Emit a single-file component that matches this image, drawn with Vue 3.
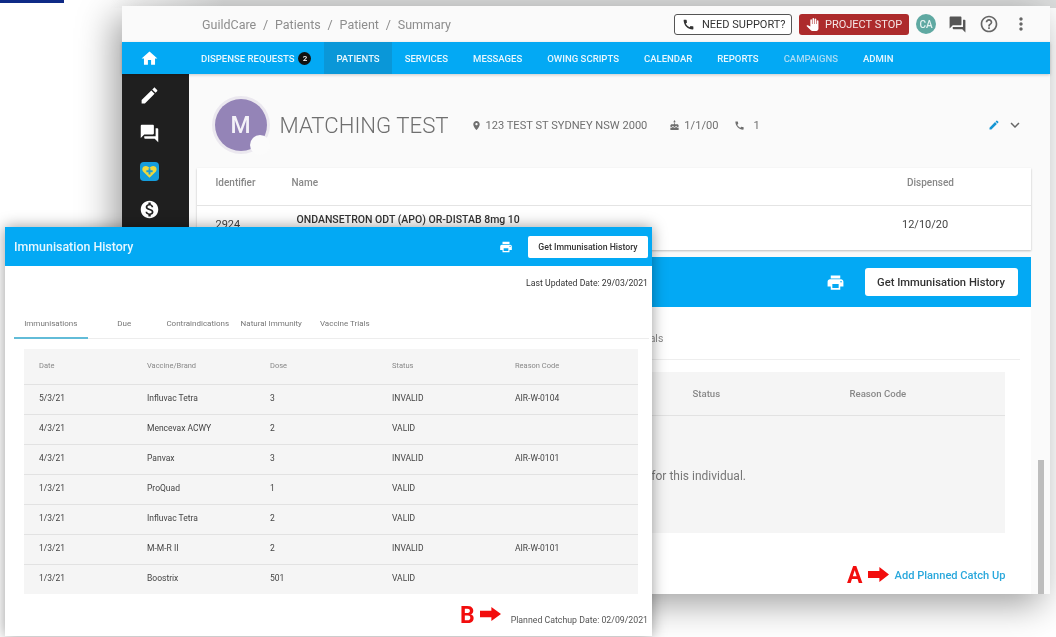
<script setup>
const icons = {
  home: 'M10 20v-6h4v6h5v-8h3L12 3 2 12h3v8z',
  edit: 'M3 17.25V21h3.75L17.81 9.94l-3.75-3.75L3 17.25zM20.71 7.04c.39-.39.39-1.02 0-1.41l-2.34-2.34c-.39-.39-1.02-.39-1.41 0l-1.83 1.83 3.75 3.75 1.83-1.83z',
  forum: 'M21 6h-2v9H6v2c0 .55.45 1 1 1h11l4 4V7c0-.55-.45-1-1-1zm-4 6V3c0-.55-.45-1-1-1H3c-.55 0-1 .45-1 1v14l4-4h10c.55 0 1-.45 1-1z',
  money: 'M12 2C6.48 2 2 6.48 2 12s4.48 10 10 10 10-4.48 10-10S17.52 2 12 2zm1.41 16.09V20h-2.67v-1.93c-1.71-.36-3.16-1.46-3.27-3.4h1.96c.1 1.05.82 1.87 2.65 1.87 1.96 0 2.4-.98 2.4-1.59 0-.83-.44-1.61-2.67-2.14-2.48-.6-4.18-1.62-4.18-3.67 0-1.72 1.39-2.84 3.11-3.21V4h2.67v1.95c1.86.45 2.79 1.86 2.85 3.39H14.3c-.05-1.11-.64-1.87-2.22-1.87-1.5 0-2.4.68-2.4 1.64 0 .84.65 1.39 2.67 1.91s4.18 1.39 4.18 3.91c-.01 1.83-1.38 2.83-3.12 3.16z',
  print: 'M19 8H5c-1.66 0-3 1.34-3 3v6h4v4h12v-4h4v-6c0-1.66-1.34-3-3-3zm-3 11H8v-5h8v5zm3-7c-.55 0-1-.45-1-1s.45-1 1-1 1 .45 1 1-.45 1-1 1zm-1-9H6v4h12V3z',
  phone: 'M20.01 15.38c-1.23 0-2.42-.2-3.53-.56-.35-.12-.74-.03-1.01.24l-1.57 1.97c-2.83-1.35-5.48-3.9-6.89-6.83l1.95-1.66c.27-.28.35-.67.24-1.02-.37-1.11-.56-2.3-.56-3.53 0-.54-.45-.99-.99-.99H4.19C3.65 3 3 3.24 3 3.99 3 13.28 10.73 21 20.01 21c.71 0 .99-.63.99-1.18v-3.45c0-.54-.45-.99-.99-.99z',
  place: 'M12 2C8.13 2 5 5.13 5 9c0 5.25 7 13 7 13s7-7.75 7-13c0-3.87-3.13-7-7-7zm0 9.5c-1.38 0-2.5-1.12-2.5-2.5s1.12-2.5 2.5-2.5 2.5 1.12 2.5 2.5-1.12 2.5-2.5 2.5z',
  cake: 'M12 6c1.11 0 2-.9 2-2 0-.38-.1-.73-.29-1.03L12 0l-1.71 2.97c-.19.3-.29.65-.29 1.03 0 1.1.9 2 2 2zm4.6 9.99l-1.07-1.07-1.08 1.07c-1.3 1.3-3.58 1.31-4.89 0l-1.07-1.07-1.09 1.07C6.75 16.64 5.88 17 4.96 17c-.73 0-1.4-.23-1.96-.61V21c0 .55.45 1 1 1h16c.55 0 1-.45 1-1v-4.61c-.56.38-1.23.61-1.96.61-.92 0-1.79-.36-2.44-1.01zM18 9h-5V7h-2v2H6c-1.66 0-3 1.34-3 3v1.54c0 1.08.88 1.96 1.96 1.96.52 0 1.02-.2 1.38-.57l2.14-2.13 2.13 2.13c.74.74 2.03.74 2.77 0l2.14-2.13 2.13 2.13c.37.37.86.57 1.38.57 1.08 0 1.96-.88 1.96-1.96V12C21 10.34 19.66 9 18 9z',
  help: 'M11 18h2v-2h-2v2zm1-16C6.48 2 2 6.48 2 12s4.48 10 10 10 10-4.48 10-10S17.52 2 12 2zm0 18c-4.41 0-8-3.59-8-8s3.59-8 8-8 8 3.59 8 8-3.59 8-8 8zm0-14c-2.21 0-4 1.79-4 4h2c0-1.1.9-2 2-2s2 .9 2 2c0 2-3 1.75-3 5h2c0-2.25 3-2.5 3-5 0-2.21-1.79-4-4-4z',
  more: 'M12 8c1.1 0 2-.9 2-2s-.9-2-2-2-2 .9-2 2 .9 2 2 2zm0 2c-1.1 0-2 .9-2 2s.9 2 2 2 2-.9 2-2-.9-2-2-2zm0 6c-1.1 0-2 .9-2 2s.9 2 2 2 2-.9 2-2-.9-2-2-2z',
  chevron: 'M16.59 8.59L12 13.17 7.41 8.59 6 10l6 6 6-6z',
  hand: 'M23 5.5V20c0 2.2-1.8 4-4 4h-7.3c-1.08 0-2.1-.43-2.85-1.19L1 14.83s1.26-1.23 1.3-1.25c.22-.19.49-.29.79-.29.22 0 .42.06.6.16.04.01 4.31 2.46 4.31 2.46V4c0-.83.67-1.5 1.5-1.5S11 3.17 11 4v7h1V1.5c0-.83.67-1.5 1.5-1.5S15 .67 15 1.5V11h1V2.5c0-.83.67-1.5 1.5-1.5s1.5.67 1.5 1.5V11h1V5.5c0-.83.67-1.5 1.5-1.5s1.5.67 1.5 1.5z'
}
const arrow = 'M0 6h13V0l11 11-11 11v-6H0z'
const crumbs = ['GuildCare', '/', 'Patients', '/', 'Patient', '/', 'Summary']
const navItems = ['Patients', 'Services', 'Messages', 'Owing Scripts', 'Calendar', 'Reports', 'Campaigns', 'Admin']
const tabs = ['Immunisations', 'Due', 'Contraindications', 'Natural Immunity', 'Vaccine Trials']
const columns = ['Date', 'Vaccine/Brand', 'Dose', 'Status', 'Reason Code']
const rows = [
  ['5/3/21', 'Influvac Tetra', '3', 'INVALID', 'AIR-W-0104'],
  ['4/3/21', 'Mencevax ACWY', '2', 'VALID', ''],
  ['4/3/21', 'Panvax', '3', 'INVALID', 'AIR-W-0101'],
  ['1/3/21', 'ProQuad', '1', 'VALID', ''],
  ['1/3/21', 'Influvac Tetra', '2', 'VALID', ''],
  ['1/3/21', 'M-M-R II', '2', 'INVALID', 'AIR-W-0101'],
  ['1/3/21', 'Boostrix', '501', 'VALID', '']
]
</script>

<template>
  <div class="canvas">
    <div class="top-strip"></div>
    <div class="corner-bar"></div>

    <section class="window back">
      <header class="appbar">
        <div class="crumbs"><span v-for="(c, i) in crumbs" :key="i">{{ c }}</span></div>
        <div class="appbar-actions">
          <button class="support">
            <svg viewBox="0 0 24 24"><path :d="icons.phone" /></svg>NEED SUPPORT?
          </button>
          <button class="stop">
            <svg viewBox="0 0 24 24"><path :d="icons.hand" /></svg>PROJECT STOP
          </button>
          <span class="user">CA</span>
          <svg class="bar-icon forum" viewBox="0 0 24 24"><path :d="icons.forum" /></svg>
          <svg class="bar-icon help" viewBox="0 0 24 24"><path :d="icons.help" /></svg>
          <svg class="bar-icon more" viewBox="0 0 24 24"><path :d="icons.more" /></svg>
        </div>
      </header>

      <nav class="nav">
        <div class="nav-home">
          <svg viewBox="0 0 24 24"><path :d="icons.home" /></svg>
        </div>
        <a class="nav-item">DISPENSE REQUESTS<span class="badge">2</span></a>
        <a
          v-for="item in navItems"
          :key="item"
          class="nav-item"
          :class="{ active: item === 'Patients', muted: item === 'Campaigns' }"
        >{{ item.toUpperCase() }}</a>
      </nav>

      <div class="body">
        <aside class="side">
          <svg viewBox="0 0 24 24"><path :d="icons.edit" /></svg>
          <svg viewBox="0 0 24 24"><path :d="icons.forum" /></svg>
          <svg class="heart" viewBox="0 0 20 20">
            <rect width="20" height="20" rx="4" fill="#159ddc" />
            <path fill="#f0d83c" d="M10 16.5 3.2 10C1.4 7.2 3.2 4 6.2 4.2 8 4.3 9.2 5.2 10 6.2 10.8 5.2 12 4.3 13.8 4.2 16.8 4 18.6 7.2 16.8 10z" />
            <path fill="#159ddc" d="M9 6.5h2V8.8h2.3v2H11v2.3H9v-2.3H6.7v-2H9z" />
          </svg>
          <svg viewBox="0 0 24 24"><path :d="icons.money" /></svg>
        </aside>

        <main class="main">
          <div class="profile">
            <div class="avatar">M</div>
            <h1 class="patient-name">MATCHING TEST</h1>
            <span class="meta meta-address">
              <svg viewBox="0 0 24 24"><path :d="icons.place" /></svg>123 TEST ST SYDNEY NSW 2000
            </span>
            <span class="meta meta-dob">
              <svg viewBox="0 0 24 24"><path :d="icons.cake" /></svg>1/1/00
            </span>
            <span class="meta meta-phone">
              <svg viewBox="0 0 24 24"><path :d="icons.phone" /></svg>1
            </span>
            <div class="profile-actions">
              <svg class="pencil" viewBox="0 0 24 24"><path :d="icons.edit" /></svg>
              <svg class="chevron" viewBox="0 0 24 24"><path :d="icons.chevron" /></svg>
            </div>
          </div>

          <div class="script-card">
            <div class="script-head">
              <span class="c-id">Identifier</span>
              <span class="c-name">Name</span>
              <span class="c-date">Dispensed</span>
            </div>
            <div class="script-row">
              <span class="c-id">2924</span>
              <span class="c-name drug">ONDANSETRON ODT (APO) OR-DISTAB 8mg 10</span>
              <span class="c-date">12/10/20</span>
            </div>
          </div>

          <div class="back-panel">
            <div class="back-panel-bar">
              <svg viewBox="0 0 24 24"><path :d="icons.print" /></svg>
              <button class="back-get">Get Immunisation History</button>
            </div>
            <div class="back-tabs">
              <span v-for="tab in tabs" :key="tab">{{ tab }}</span>
            </div>
            <div class="back-table">
              <div class="back-table-head">
                <span v-for="col in columns.slice(3)" :key="col">{{ col }}</span>
              </div>
              <div class="back-empty">No immunisations are recorded for this individual.</div>
            </div>
            <div class="catch-up">
              <span class="mark">A</span>
              <svg class="mark-arrow" viewBox="0 0 24 22" preserveAspectRatio="none"><path :d="arrow" /></svg>
              <a class="catch-link">Add Planned Catch Up</a>
            </div>
          </div>
        </main>
        <div class="scroll-rail"><div class="scroll-thumb"></div></div>
      </div>
    </section>

    <section class="window front">
      <header class="front-bar">
        <h2>Immunisation History</h2>
        <svg viewBox="0 0 24 24"><path :d="icons.print" /></svg>
        <button>Get Immunisation History</button>
      </header>
      <div class="updated">Last Updated Date: 29/03/2021</div>
      <div class="front-tabs">
        <span v-for="(tab, i) in tabs" :key="tab" class="front-tab" :class="{ on: i === 0 }">{{ tab }}</span>
      </div>
      <div class="front-table">
        <div class="front-row head">
          <span v-for="col in columns" :key="col">{{ col }}</span>
        </div>
        <div v-for="(row, i) in rows" :key="i" class="front-row">
          <span v-for="(cell, j) in row" :key="j">{{ cell }}</span>
        </div>
      </div>
      <div class="planned">
        <span class="mark">B</span>
        <svg class="mark-arrow" viewBox="0 0 24 22" preserveAspectRatio="none"><path :d="arrow" /></svg>
        <span class="planned-text">Planned Catchup Date: 02/09/2021</span>
      </div>
    </section>
  </div>
</template>

<style scoped>
.canvas {
  position: relative;
  width: 1056px;
  height: 637px;
  overflow: hidden;
  background: #fff;
  font-family: Roboto, "Liberation Sans", sans-serif;
  filter: blur(0.4px);
}
svg { display: block; fill: currentColor; }
button { font-family: inherit; cursor: pointer; }
h1, h2 { margin: 0; font-weight: inherit; }

.top-strip {
  position: absolute;
  left: 110px;
  right: 0;
  top: 0;
  height: 8px;
  background: linear-gradient(90deg, #fff, #dcdddd 12%);
}
.corner-bar {
  position: absolute;
  left: 0;
  top: 0;
  width: 64px;
  height: 3px;
  background: #0f2a86;
}
.window { position: absolute; background: #fff; }

.back {
  left: 122px;
  top: 6px;
  width: 928px;
  height: 588px;
  display: flex;
  flex-direction: column;
  background: #fafafa;
  box-shadow: -8px 10px 34px rgba(0, 0, 0, 0.38);
}
.appbar {
  height: 36px;
  flex: none;
  display: flex;
  align-items: center;
  justify-content: space-between;
  padding-left: 80px;
  background: #fafafa;
}
.crumbs { display: flex; gap: 6.8px; font-size: 12.5px; color: #8d8d8d; }
.appbar-actions { display: flex; align-items: center; }
.support, .stop {
  display: flex;
  align-items: center;
  height: 21px;
  padding: 0;
  font-size: 11px;
  border-radius: 3px;
  box-sizing: border-box;
}
.support {
  width: 118px;
  padding-left: 7px;
  gap: 7px;
  border: 1px solid #555;
  background: #fff;
  color: #333;
}
.support svg { width: 13px; height: 13px; }
.stop {
  width: 110px;
  margin-left: 7px;
  padding-left: 7px;
  gap: 6px;
  border: none;
  background: #ad2b2c;
  color: #f5e6e6;
}
.stop svg { width: 13px; height: 13px; color: #fff; }
.user {
  width: 20px;
  height: 20px;
  margin-left: 7px;
  border-radius: 50%;
  background: #5fa9a2;
  color: #e6f3f1;
  font-size: 10px;
  font-weight: 500;
  display: flex;
  align-items: center;
  justify-content: center;
}
.bar-icon { width: 20px; height: 20px; color: #555; }
.forum { margin-left: 12px; width: 19px; height: 19px; }
.help { margin-left: 12px; width: 20px; height: 20px; color: #666; }
.more { margin-left: 12px; margin-right: 19px; color: #666; }

.nav {
  height: 32px;
  flex: none;
  display: flex;
  align-items: stretch;
  background: #03a9f4;
  color: #e8f7fe;
  box-shadow: 0 1px 3px rgba(0, 0, 0, 0.2);
  position: relative;
  z-index: 1;
}
.nav-home {
  width: 66.5px;
  box-sizing: border-box;
  padding-right: 11px;
  display: flex;
  align-items: center;
  justify-content: center;
  color: #fff;
}
.nav-home svg { width: 19px; height: 19px; }
.nav-item {
  display: flex;
  align-items: center;
  padding: 0 12.5px;
  font-size: 9.55px;
  font-weight: 500;
}
.nav-item.active { background: #0a97d8; }
.nav-item.muted { color: #a9dcf6; }
.badge {
  width: 13px;
  height: 13px;
  margin-left: 4px;
  border-radius: 50%;
  background: #111;
  color: #fff;
  font-size: 8px;
  display: flex;
  align-items: center;
  justify-content: center;
}

.body { flex: 1; min-height: 0; display: flex; position: relative; overflow: hidden; }
.side {
  width: 66.5px;
  flex: none;
  box-sizing: border-box;
  padding: 11px 11px 0 0;
  background: #1f1f1f;
  color: #fff;
  display: flex;
  flex-direction: column;
  align-items: center;
  gap: 17px;
}
.side svg { width: 21px; height: 21px; }
.side .heart { width: 19px; height: 19px; margin: 1px 0; }
.main { flex: 1; min-width: 0; padding-left: 8px; background: #fafafa; }

.profile { height: 94px; box-sizing: border-box; padding-top: 8px; display: flex; align-items: center; color: #777; }
.avatar {
  width: 52px;
  height: 52px;
  margin-left: 18px;
  flex: none;
  box-sizing: border-box;
  border-radius: 50%;
  background: #9484b7;
  box-shadow: 0 0 0 3px #ebe8ef;
  color: #f4f2f8;
  font-size: 23px;
  font-weight: 500;
  display: flex;
  align-items: center;
  justify-content: center;
  position: relative;
}
.avatar::after {
  content: "";
  position: absolute;
  right: -3px;
  bottom: -4px;
  width: 20px;
  height: 20px;
  border-radius: 50%;
  background: #fbfbfb;
}
.patient-name {
  margin-left: 13px;
  width: 191px;
  flex: none;
  font-size: 22.2px;
  font-weight: 300;
  color: #6f6f6f;
}
.meta {
  display: flex;
  align-items: center;
  gap: 4px;
  font-size: 11.1px;
  color: #6f6f6f;
}
.meta svg { width: 11px; height: 11px; }
.meta-address { margin-right: 22px; }
.meta-dob { margin-right: 16px; }
.meta-phone { gap: 8px; }
.profile-actions {
  margin-left: auto;
  margin-right: 26px;
  display: flex;
  align-items: center;
  gap: 6px;
}
.pencil { width: 12px; height: 12px; color: #1596d4; }
.chevron { width: 18px; height: 18px; color: #666; }

.script-card {
  width: 834.5px;
  height: 82px;
  background: #fff;
  box-shadow: 0 1px 2px rgba(0, 0, 0, 0.25);
}
.script-head, .script-row { display: flex; align-items: center; box-sizing: border-box; }
.script-head {
  height: 38px;
  padding-bottom: 8px;
  border-bottom: 1px solid #e4e4e4;
  font-size: 10px;
  font-weight: 500;
  color: #888;
}
.script-row { height: 44px; padding-bottom: 8px; font-size: 11px; color: #444; }
.c-id { width: 76px; margin-left: 19px; flex: none; }
.c-name { flex: 1; }
.drug { margin-left: 5px; margin-top: -10px; font-size: 10.5px; font-weight: 500; color: #333; }
.c-date { width: 124px; flex: none; }
.script-row .c-date { margin-left: -5px; width: 129px; }

.back-panel { width: 834.5px; margin-top: 7px; background: #fff; height: 345px; }
.back-panel-bar {
  height: 50px;
  box-sizing: border-box;
  padding-right: 13.5px;
  background: #03a9f4;
  display: flex;
  align-items: center;
  justify-content: flex-end;
  gap: 20px;
  color: #fff;
}
.back-panel-bar svg { width: 19px; height: 19px; }
.back-get {
  width: 153px;
  height: 28px;
  border: none;
  border-radius: 3px;
  background: #fff;
  color: #333;
  font-size: 11.2px;
  font-weight: 500;
}
.back-tabs {
  height: 53px;
  padding-top: 11px;
  margin-right: 11px;
  display: grid;
  grid-template-columns: repeat(5, 96.5px);
  align-items: center;
  justify-items: center;
  border-bottom: 1px solid #eee;
  font-size: 10.5px;
  color: #888;
  box-sizing: border-box;
}
.back-table {
  margin: 12px 0 0 25px;
  width: 783.5px;
  height: 161px;
  background: #f5f5f5;
  display: flex;
  flex-direction: column;
}
.back-table-head {
  height: 44px;
  flex: none;
  padding-left: 471px;
  display: grid;
  grid-template-columns: 157px 1fr;
  align-items: center;
  border-bottom: 1px solid #e2e2e2;
  font-size: 9.6px;
  font-weight: 500;
  color: #888;
  box-sizing: border-box;
}
.back-empty {
  flex: 1;
  display: flex;
  align-items: center;
  justify-content: center;
  padding-top: 2px;
  font-size: 12px;
  color: #777;
}
.catch-up {
  width: 809px;
  height: 60px;
  display: flex;
  align-items: center;
  justify-content: flex-end;
  padding-top: 24px;
  box-sizing: border-box;
}
.mark { font-weight: 700; color: #f20d0d; line-height: 1; }
.mark-arrow { color: #f20d0d; }
.catch-up .mark { font-size: 23px; }
.catch-up .mark-arrow { width: 21px; height: 15px; margin: 0 6px 2px 5px; }
.catch-link { font-size: 11.1px; font-weight: 500; color: #2aa8dc; }

.scroll-rail { position: absolute; right: 6px; top: 0; bottom: 0; width: 6px; }
.scroll-thumb { position: absolute; left: 0; right: 0; bottom: 0; height: 134px; background: #bdbdbd; }

.front {
  left: 5px;
  top: 227px;
  width: 647px;
  height: 409px;
  box-shadow: 0 0 14px rgba(0, 0, 0, 0.4);
  color: #555;
}
.front-bar {
  height: 39px;
  box-sizing: border-box;
  padding: 0 4px 0 9px;
  display: flex;
  align-items: center;
  background: #03a9f4;
  color: #fff;
}
.front-bar h2 { flex: 1; font-size: 12.4px; font-weight: 500; color: #e6f7ff; }
.front-bar svg { width: 14px; height: 14px; margin-right: 15px; }
.front-bar button {
  width: 120px;
  height: 22px;
  padding: 0;
  border: none;
  border-radius: 2px;
  background: #fff;
  color: #333;
  font-size: 8.7px;
  font-weight: 500;
}
.updated {
  height: 34px;
  padding-right: 4px;
  display: flex;
  align-items: center;
  justify-content: flex-end;
  font-size: 8.7px;
  color: #333;
}
.front-tabs {
  height: 39px;
  margin: 0 3px 0 9px;
  display: flex;
  box-sizing: border-box;
  border-bottom: 1px solid #ededed;
}
.front-tab {
  width: 73.5px;
  display: flex;
  align-items: center;
  justify-content: center;
  box-sizing: border-box;
  padding-top: 9px;
  font-size: 8px;
  color: #777;
  white-space: nowrap;
}
.front-tab.on { border-bottom: 2px solid #62bcd8; height: 39px; }
.front-table { margin: 10px 14px 0 19px; background: #f5f5f5; }
.front-row {
  height: 30px;
  box-sizing: border-box;
  padding: 0 0 3px 15px;
  display: grid;
  grid-template-columns: 108px 123px 122px 123px 1fr;
  align-items: center;
  border-top: 1px solid #e2e2e2;
  font-size: 8.5px;
  color: #444;
}
.front-row.head { height: 35px; border-top: none; font-size: 7.5px; color: #888; padding-bottom: 3px; }
.planned {
  height: 42px;
  padding-right: 4px;
  display: flex;
  align-items: center;
  justify-content: flex-end;
  box-sizing: border-box;
}
.planned .mark { font-size: 23px; padding-top: 1px; }
.planned .mark-arrow { width: 21px; height: 14px; margin: 0 10px 2px 5px; }
.planned-text { font-size: 8.75px; color: #555; padding-top: 9px; }
</style>
